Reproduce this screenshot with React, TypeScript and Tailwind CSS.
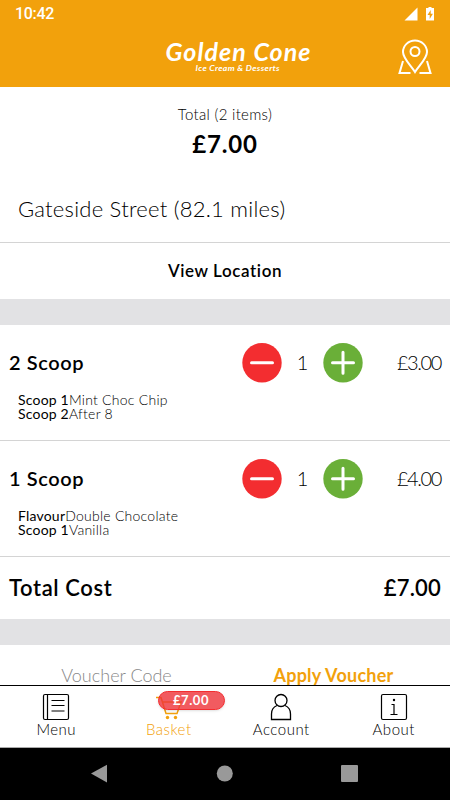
import React from 'react';

const items = [
  {
    name: '2 Scoop',
    price: '£3.00',
    options: [
      { label: 'Scoop 1', value: 'Mint Choc Chip' },
      { label: 'Scoop 2', value: 'After 8' },
    ],
  },
  {
    name: '1 Scoop',
    price: '£4.00',
    options: [
      { label: 'Flavour', value: 'Double Chocolate' },
      { label: 'Scoop 1', value: 'Vanilla' },
    ],
  },
];

const Header = () => (
  <header className="h-[87px] shrink-0 bg-[#f2a10c] text-white">
    <div className="flex h-7 items-center justify-between px-[15px]">
      <span className="font-[Roboto] text-base font-medium leading-7 tracking-[-0.3px]">10:42</span>
      <svg className="h-[14px] w-[31px]" viewBox="0 0 31 14" fill="currentColor">
        <path d="M13.5 .5V13.5H.5z" />
        <path fillRule="evenodd" d="M22 1h2.500V0h3v1H30v12.500h-8zM26.700 3l-3.200 5h2.200v4l3.200-5.200h-2.200z" />
      </svg>
    </div>
    <div className="flex h-[59px] items-start justify-between pl-[163px] pr-[18px]">
      <svg className="h-[50px] w-[150px]" viewBox="0 0 150 50" fill="currentColor">
        <text x="2.5" y="33" textLength="146" lengthAdjust="spacingAndGlyphs" fontFamily="Lato, sans-serif" fontSize="24" fontWeight="700" fontStyle="italic" letterSpacing="1">Golden Cone</text>
        <text x="32.5" y="43" textLength="84.500" lengthAdjust="spacingAndGlyphs" fontFamily="Lato, sans-serif" fontSize="7.500" fontWeight="700" fontStyle="italic" letterSpacing=".3">Ice Cream &amp; Desserts</text>
      </svg>
      <svg className="mt-[11px] h-[36px] w-[34px]" viewBox="0 0 34 36" fill="none" stroke="currentColor" strokeWidth="2">
        <path d="M17 33C13 26.500 5 19.500 5 13A12 11.500 0 0 1 29 13C29 19.500 21 26.500 17 33z" />
        <circle cx="17" cy="12.500" r="4.500" />
        <path d="M5 22L1.500 34H12.500M29 22L32.500 34H21.500" />
      </svg>
    </div>
  </header>
);

const RoundButton = ({ plus = false }: { plus?: boolean }) => (
  <button className="h-10 w-10">
    <svg className="h-10 w-10" viewBox="0 0 40 40" fill="none" stroke="white" strokeWidth="3" strokeLinecap="round">
      <circle cx="20" cy="19.700" r="19.700" fill={plus ? '#6aaf38' : '#f32d30'} stroke="none" />
      <path d={plus ? 'M9.500 19.700H30.500M20 9.200V30.200' : 'M9.500 19.700H30.500'} />
    </svg>
  </button>
);

const BasketItem = ({ item }: { item: (typeof items)[number] }) => (
  <div className="h-[116px] border-b border-[#d4d4d4] pt-[18px]">
    <div className="flex h-10 items-center px-[9px]">
      <span className="w-[233px] pb-0.5 text-[20px] font-semibold tracking-[0.6px]">{item.name}</span>
      <RoundButton />
      <span className="w-[41px] pb-0.5 text-center text-[20px] font-light">1</span>
      <RoundButton plus />
      <span className="ml-auto pb-0.5 text-[20px] font-light tracking-[-1.4px]">{item.price}</span>
    </div>
    <div className="pl-[18px] pt-[10px] text-sm leading-[14.400px]">
      {item.options.map((option) => (
        <div key={option.label}>
          <span className="tracking-[0.200px]">{option.label}</span>
          <span className="font-light tracking-[0.250px]">{option.value}</span>
        </div>
      ))}
    </div>
  </div>
);

const MenuIcon = () => (
  <svg className="h-7 w-7" viewBox="0 0 28 28" fill="none" stroke="currentColor" strokeWidth="1.200">
    <rect x="1.500" y="1.500" width="25" height="25" rx="1.500" />
    <path d="M5.500 1.500V26.500M9.500 7.500H22.500M9.500 12.500H22.500M9.500 18H22.500" />
  </svg>
);

const BasketIcon = () => (
  <svg className="h-7 w-7" viewBox="0 0 28 28" fill="none" stroke="currentColor" strokeWidth="1.500">
    <path d="M1 4.500H6L11 20.500H22L26 9H7.500" />
    <circle cx="12.500" cy="24.500" r="1.700" fill="currentColor" stroke="none" />
    <circle cx="20.500" cy="24.500" r="1.700" fill="currentColor" stroke="none" />
  </svg>
);

const AccountIcon = () => (
  <svg className="h-7 w-7" viewBox="0 0 28 28" fill="none" stroke="currentColor" strokeWidth="1.300">
    <circle cx="14" cy="7.500" r="6" />
    <path d="M10 12.500C6 14 4.500 17 4.500 21V26.500H23.500V21C23.500 17 22 14 18 12.500" />
  </svg>
);

const AboutIcon = () => (
  <svg className="h-7 w-7" viewBox="0 0 28 28" fill="none" stroke="currentColor" strokeWidth="1.200">
    <rect x="1.500" y="1.500" width="25" height="25" rx="1.500" />
    <path d="M11.500 11.500H14V21.500M10.500 21.500H17.500" />
    <circle cx="14" cy="7" r="1.200" fill="currentColor" stroke="none" />
  </svg>
);

const TabBar = () => (
  <nav className="grid h-[63px] shrink-0 grid-cols-4 border-b border-t border-b-[#aaa] border-t-black bg-white text-[15px] font-light">
    <div className="flex flex-col items-center pt-[7px]">
      <MenuIcon />
      <span className="-mt-0.5 leading-5 tracking-[0.500px]">Menu</span>
    </div>
    <div className="relative flex flex-col items-center pt-[7px] text-[#f2a10c]">
      <BasketIcon />
      <span className="-mt-0.5 leading-5 tracking-[0.500px]">Basket</span>
      <span className="absolute left-[45px] top-[5px] h-[19px] w-[67px] rounded-full border border-[#f32d30] bg-[#ee3238]/80 text-center text-[13px] font-bold leading-[17px] tracking-[0.600px] text-white shadow">£7.00</span>
    </div>
    <div className="flex flex-col items-center pt-[7px]">
      <AccountIcon />
      <span className="-mt-0.5 leading-5 tracking-[0.500px]">Account</span>
    </div>
    <div className="flex flex-col items-center pt-[7px]">
      <AboutIcon />
      <span className="-mt-0.5 leading-5 tracking-[0.500px]">About</span>
    </div>
  </nav>
);

const SystemBar = () => (
  <div className="h-[52px] shrink-0 bg-black">
    <svg className="h-[52px] w-[450px]" viewBox="0 0 450 52" fill="#999">
      <path d="M91 25.500L107 16.800V34.500z" />
      <circle cx="224.800" cy="25.500" r="8" />
      <rect x="341" y="17" width="17" height="17" rx="1" />
    </svg>
  </div>
);

const App = () => (
  <div className="flex h-[800px] w-[450px] flex-col overflow-hidden bg-white font-[Lato,sans-serif] text-black">
    <Header />
    <main className="min-h-0 flex-1 overflow-hidden">
      <section className="h-[156px] border-b border-[#d4d4d4] pt-[17px]">
        <p className="text-center text-[15px] font-light leading-5 tracking-[0.300px]">Total (2 items)</p>
        <p className="mt-[5px] text-center text-2xl font-bold leading-[30px] tracking-[0.800px]">£7.00</p>
        <p className="mt-[35px] pl-[18px] text-[22px] font-light leading-[30px] tracking-[0.250px]">Gateside Street (82.1 miles)</p>
      </section>
      <button className="h-14 w-full text-center text-[17px] font-semibold tracking-[0.600px]">View Location</button>
      <div className="h-[26px] bg-[#e2e2e4]" />
      {items.map((item) => (
        <BasketItem key={item.name} item={item} />
      ))}
      <div className="flex h-[61px] items-center justify-between px-[9px] text-[22px] font-semibold">
        <span className="tracking-[0.600px]">Total Cost</span>
        <span className="tracking-[0.200px]">£7.00</span>
      </div>
      <div className="mt-px h-[26px] bg-[#e2e2e4]" />
      <div className="grid grid-cols-2 pt-[18px] text-center text-lg leading-6">
        <span className="pl-2 font-light text-[#888]">Voucher Code</span>
        <span className="pr-2 font-bold tracking-[0.250px] text-[#f2a10c]">Apply Voucher</span>
      </div>
    </main>
    <TabBar />
    <SystemBar />
  </div>
);

export default App;
